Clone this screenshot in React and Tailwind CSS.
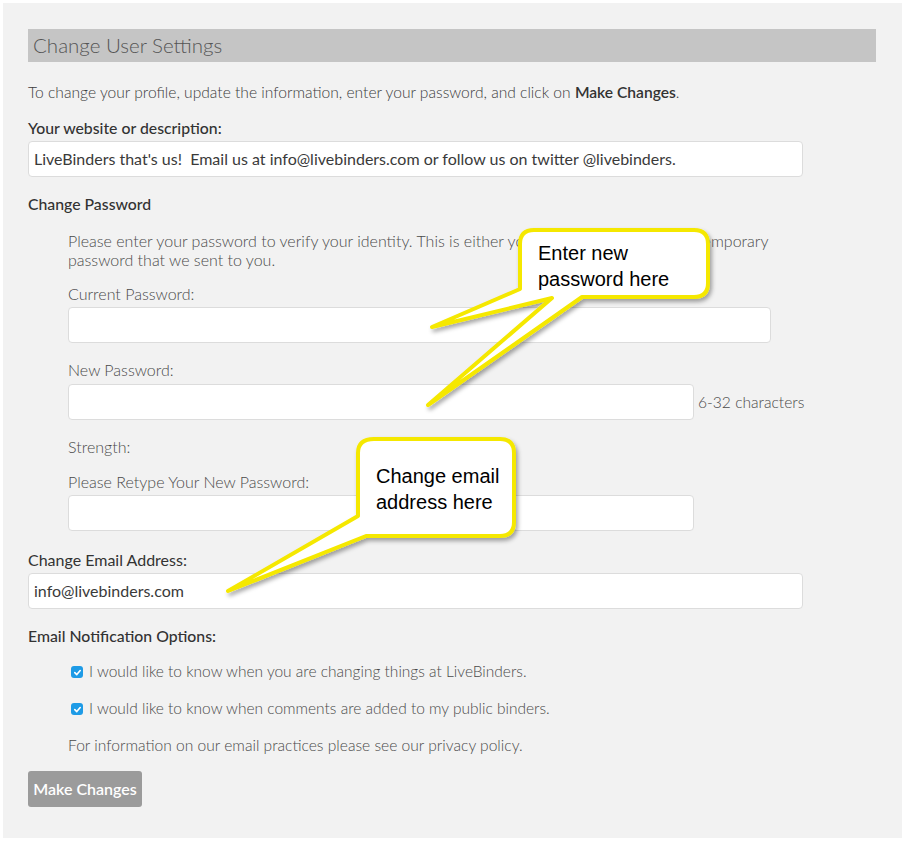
import React from "react";

function Check() {
  return (
    <span className="inline-flex h-[12px] w-[12px] items-center justify-center rounded-[3px] bg-[#1e9be6]">
      <svg width="9" height="9" viewBox="0 0 10 10">
        <path d="M2 5.2 L4.2 7.3 L8 2.8" fill="none" stroke="#fff" strokeWidth="1.8" strokeLinecap="round" strokeLinejoin="round" />
      </svg>
    </span>
  );
}

function Input({ value = "", className = "" }) {
  return (
    <div className={"h-[36px] rounded-[4px] border border-[#dcdcdc] bg-white px-[5px] flex items-center text-[16px] text-[#3a3a3a] whitespace-pre " + className}>
      {value}
    </div>
  );
}

export default function App() {
  const font = { fontFamily: "Lato, 'Open Sans', sans-serif" };
  const callFont = { fontFamily: "'Liberation Sans', Arial, sans-serif" };
  return (
    <div className="h-[845px] w-[902px] bg-white overflow-hidden">
      <div
        className="relative ml-[3px] mt-[3px] h-[835px] w-[899px] bg-[#f2f2f2] pl-[25px] pt-[26px] text-[#444]"
        style={font}
      >
        <div className="h-[33px] w-[848px] bg-[#c5c5c5] pl-[5px] flex items-center text-[20.5px] font-light text-[#555]">
          Change User Settings
        </div>
        <p className="mt-[20px] h-[20px] leading-[20px] text-[15.6px] font-light text-[#3c3c3c]">
          To change your profile, update the information, enter your password, and click on{" "}
          <span className="font-semibold text-[#333]">Make Changes</span>.
        </p>
        <div className="mt-[16px] h-[20px] leading-[20px] text-[15.8px] font-medium text-[#333]">
          Your website or description:
        </div>
        <Input
          className="mt-[3px] w-[775px]"
          value={"LiveBinders that's us!  Email us at info@livebinders.com or follow us on twitter @livebinders."}
        />
        <div className="mt-[17px] h-[20px] leading-[20px] text-[15.8px] font-medium text-[#333]">
          Change Password
        </div>
        <div className="ml-[40px]">
          <p className="mt-[17px] w-[712px] leading-[19px] text-[16px] font-light text-[#4a4a4a]">
            Please enter your password to verify your identity. This is either your current password or a temporary
            password that we sent to you.
          </p>
          <div className="mt-[15px] h-[20px] leading-[20px] text-[16px] font-light text-[#4a4a4a]">Current Password:</div>
          <Input className="mt-[3px] w-[703px]" />
          <div className="mt-[17px] h-[20px] leading-[20px] text-[16px] font-light text-[#4a4a4a]">New Password:</div>
          <div className="mt-[4px] flex items-center">
            <Input className="w-[626px]" />
            <span className="ml-[4px] mt-[2px] text-[15.6px] font-light text-[#4a4a4a]">6-32 characters</span>
          </div>
          <div className="mt-[17px] h-[20px] leading-[20px] text-[16px] font-light text-[#4a4a4a]">Strength:</div>
          <div className="mt-[15px] h-[20px] leading-[20px] text-[16px] font-light text-[#4a4a4a]">
            Please Retype Your New Password:
          </div>
          <Input className="mt-[3px] w-[626px]" />
        </div>
        <div className="mt-[19px] h-[20px] leading-[20px] text-[16px] text-[#333]">Change Email Address:</div>
        <Input className="mt-[3px] w-[775px]" value="info@livebinders.com" />
        <div className="mt-[17px] h-[20px] leading-[20px] text-[15.8px] font-medium text-[#333]">
          Email Notification Options:
        </div>
        <div className="ml-[43px]">
          <div className="mt-[16px] flex h-[20px] items-center gap-[6px] text-[15.5px] font-light text-[#4a4a4a]">
            <Check />
            <span>I would like to know when you are changing things at LiveBinders.</span>
          </div>
          <div className="mt-[17px] flex h-[20px] items-center gap-[6px] text-[15.5px] font-light text-[#4a4a4a]">
            <Check />
            <span>I would like to know when comments are added to my public binders.</span>
          </div>
        </div>
        <div className="ml-[40px] mt-[16px] h-[20px] leading-[20px] text-[15.6px] font-light text-[#4a4a4a]">
          For information on our email practices please see our privacy policy.
        </div>
        <button className="mt-[16px] h-[36px] w-[114px] rounded-[3px] bg-[#9b9b9b] text-[16px] font-semibold text-white">
          Make Changes
        </button>

        {/* callouts overlay */}
        <svg className="pointer-events-none absolute left-[-3px] top-[-3px]" width="902" height="845">
          <defs>
            <filter id="sh" x="-20%" y="-20%" width="140%" height="140%">
              <feDropShadow dx="2" dy="3" stdDeviation="2" floodColor="#000" floodOpacity="0.35" />
            </filter>
          </defs>
          <path
            d="M534 230 H694 Q708 230 708 244 V283 Q708 297 694 297 H582 L428 405 L552 298 L432 327 L520 289 V244 Q520 230 534 230 Z"
            fill="#fff"
            stroke="#f5e800"
            strokeWidth="4"
            strokeLinejoin="round"
            filter="url(#sh)"
          />
          <path
            d="M374 439 H500 Q514 439 514 453 V522 Q514 536 500 536 H366 L228 591 L358 516 V453 Q358 439 374 439 Z"
            fill="#fff"
            stroke="#f5e800"
            strokeWidth="4"
            strokeLinejoin="round"
            filter="url(#sh)"
          />
        </svg>
        <div className="absolute left-[535px] top-[237px] text-[20px] leading-[26px] text-black" style={callFont}>
          Enter new
          <br />
          password here
        </div>
        <div className="absolute left-[373px] top-[460px] text-[20px] leading-[26px] text-black" style={callFont}>
          Change email
          <br />
          address here
        </div>
      </div>
    </div>
  );
}
